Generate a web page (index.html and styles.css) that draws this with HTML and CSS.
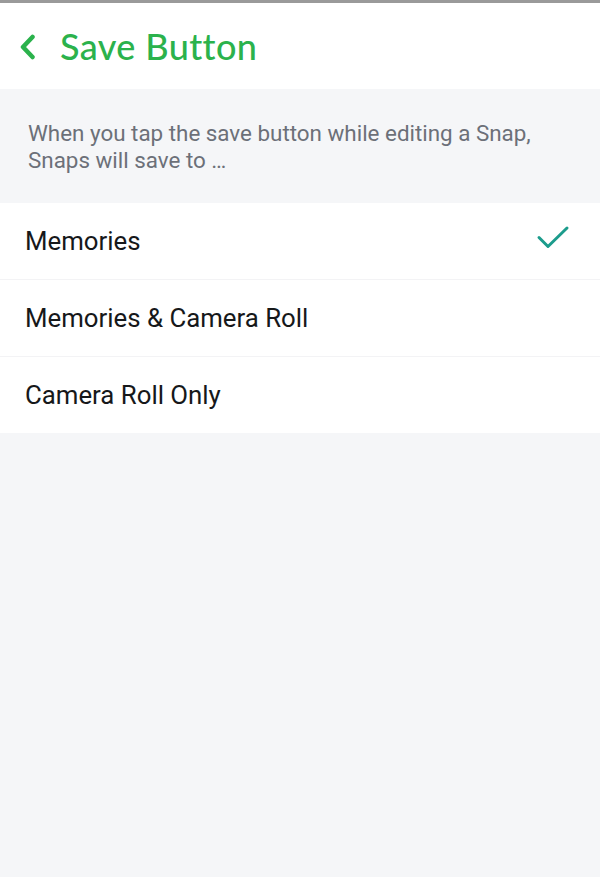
FILE: index.html
```html
<!DOCTYPE html>
<html lang="en">
<head>
  <meta charset="UTF-8">
  <meta name="viewport" content="width=device-width, initial-scale=1.0">
  <title>Save Button</title>
  <link rel="stylesheet" href="styles.css">
</head>
<body>
  <div class="top-bar"></div>
  <header class="header">
    <svg class="back-icon" width="18" height="26" viewBox="0 0 18 26">
      <path d="M13.5 3 L4 13 L13.5 23" fill="none" stroke="#2bb24c" stroke-width="4.5" stroke-linecap="round" stroke-linejoin="round"/>
    </svg>
    <h1>Save Button</h1>
  </header>

  <div class="intro">
    When you tap the save button while editing a Snap,<br>
    Snaps will save to …
  </div>

  <ul class="options">
    <li class="option">
      <span>Memories</span>
      <svg class="check" width="34" height="28" viewBox="0 0 34 28">
        <path d="M3 12.5 L12 21.5 L31 3" fill="none" stroke="#1c9c8c" stroke-width="3" stroke-linecap="round" stroke-linejoin="round"/>
      </svg>
    </li>
    <li class="option"><span>Memories &amp; Camera Roll</span></li>
    <li class="option"><span>Camera Roll Only</span></li>
  </ul>
</body>
</html>
```

FILE: styles.css
```css
body {
  margin: 0;
  background-color: #f5f6f8;
  font-family: Roboto, "Liberation Sans", sans-serif;
}
.top-bar {
  height: 3px;
  background-color: #9a9a9a;
}
.header {
  display: flex;
  align-items: center;
  height: 86px;
  padding-left: 19px;
  background-color: #fff;
}
.back-icon {
  margin-right: 23px;
  margin-top: 2px;
}
.header h1 {
  margin: 0;
  font-family: Lato, "Noto Sans", sans-serif;
  font-size: 36px;
  font-weight: 500;
  color: #2bb24c;
  letter-spacing: 0.4px;
}
.intro {
  height: 114px;
  box-sizing: border-box;
  padding: 31px 28px 0;
  font-size: 22.4px;
  line-height: 27px;
  color: #6c7078;
}
.options {
  list-style: none;
  margin: 0;
  padding: 0;
  background-color: #fff;
}
.option {
  display: flex;
  align-items: center;
  justify-content: space-between;
  height: 76px;
  padding: 0 30px 0 25px;
  font-size: 25.8px;
  color: #16181a;
  border-bottom: 1px solid #f3f3f5;
}
.option:last-child {
  border-bottom: none;
}
.check {
  margin-top: -4px;
}
```
